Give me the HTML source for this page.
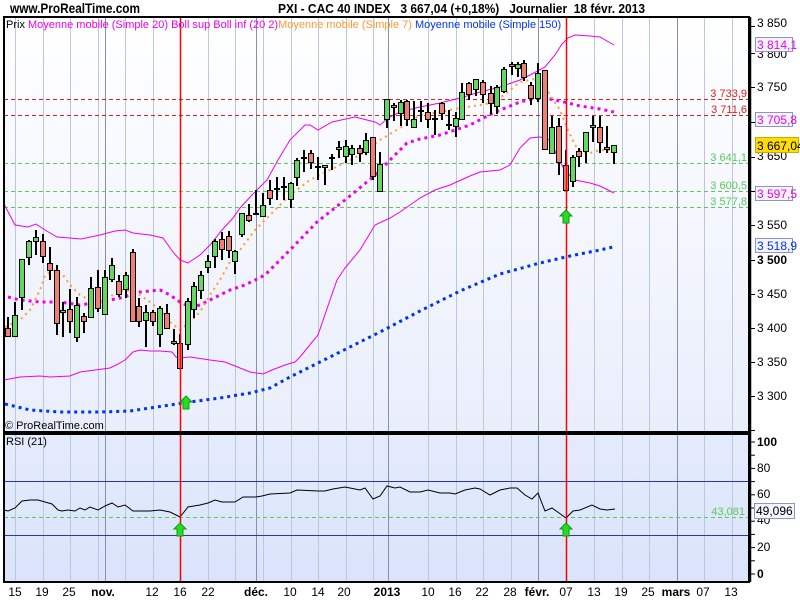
<!DOCTYPE html>
<html><head><meta charset="utf-8"><style>
body{margin:0;width:800px;height:600px;overflow:hidden;background:#fff}
svg{display:block}
text{font-family:"Liberation Sans",Arial,sans-serif}
</style></head><body>
<svg id="s" width="800" height="600" xmlns="http://www.w3.org/2000/svg">
<defs>
<linearGradient id="gm" x1="0" y1="0" x2="0" y2="1"><stop offset="0" stop-color="#ffffff"/><stop offset="1" stop-color="#e9eefb"/></linearGradient>
<linearGradient id="gr" x1="0" y1="0" x2="0" y2="1"><stop offset="0" stop-color="#e4ebfc"/><stop offset="1" stop-color="#dae3fa"/></linearGradient>
</defs>
<rect x="0" y="0" width="800" height="600" fill="#fff"/>
<rect x="4" y="17" width="745" height="415" fill="url(#gm)"/>
<rect x="4" y="434" width="745" height="148" fill="url(#gr)"/>
<g id="grid"></g>
<g id="hl">
<line x1="4" y1="99.5" x2="749" y2="99.5" stroke="#e02020" stroke-dasharray="4,3"/>
<line x1="4" y1="115.5" x2="749" y2="115.5" stroke="#e02020" stroke-dasharray="4,3"/>
<line x1="4" y1="163.5" x2="749" y2="163.5" stroke="#5cc85c" stroke-dasharray="4,3"/>
<line x1="4" y1="191.5" x2="749" y2="191.5" stroke="#5cc85c" stroke-dasharray="4,3"/>
<line x1="4" y1="207.5" x2="749" y2="207.5" stroke="#5cc85c" stroke-dasharray="4,3"/>
<line x1="4" y1="481.5" x2="749" y2="481.5" stroke="#2b36a8"/>
<line x1="4" y1="535.5" x2="749" y2="535.5" stroke="#2b36a8"/>
<line x1="4" y1="517.5" x2="749" y2="517.5" stroke="#5cc85c" stroke-dasharray="4,3"/>
</g>
<g id="lines"></g>
<g id="candles"></g>
<line x1="180.5" y1="17" x2="180.5" y2="582" stroke="#ff0000" stroke-width="1.5"/>
<line x1="566.5" y1="17" x2="566.5" y2="582" stroke="#ff0000" stroke-width="1.5"/>
<g id="arrows"></g>
<rect x="4" y="17" width="745" height="415" fill="none" stroke="#000" stroke-width="2"/>
<rect x="4" y="434" width="745" height="148" fill="none" stroke="#000" stroke-width="2"/>
<text x="10" y="13" font-size="14" font-weight="bold" textLength="130" lengthAdjust="spacingAndGlyphs">www.ProRealTime.com</text>
<text x="278" y="13" font-size="13" font-weight="bold" textLength="367" lengthAdjust="spacingAndGlyphs" xml:space="preserve">PXI - CAC 40 INDEX   3 667,04 (+0,18%)   Journalier  18 févr. 2013</text>
<text x="6" y="28" font-size="11"><tspan fill="#000">Prix </tspan><tspan fill="#ee00ee">Moyenne mobile (Simple 20)  Boll sup Boll inf (20 2)</tspan><tspan fill="#ff9933">Moyenne mobile (Simple 7)</tspan><tspan fill="#0033ee"> Moyenne mobile (Simple 150)</tspan></text>
<text x="5" y="429" font-size="11">© ProRealTime.com</text>
<text x="6" y="445" font-size="11">RSI (21)</text>
<g font-size="11" text-anchor="end">
<text x="747" y="97" fill="#e02020">3 733,9</text>
<text x="747" y="113" fill="#e02020">3 711,6</text>
<text x="747" y="161" fill="#5cc85c">3 641,1</text>
<text x="747" y="189" fill="#5cc85c">3 600,5</text>
<text x="747" y="205" fill="#5cc85c">3 577,8</text>
<text x="745" y="515" fill="#5cc85c">43,081</text>
</g>
<line x1="750.5" y1="17" x2="750.5" y2="582" stroke="#000" stroke-width="1.5"/>
<g id="ticks"></g>
<g font-size="12">
<text x="757" y="27">3 850</text>
<text x="757" y="58">3 800</text>
<text x="757" y="91">3 750</text>
<text x="757" y="160">3 650</text>
<text x="757" y="229">3 550</text>
<text x="757" y="264" font-weight="bold">3 500</text>
<text x="757" y="298">3 450</text>
<text x="757" y="332">3 400</text>
<text x="757" y="366">3 350</text>
<text x="757" y="400">3 300</text>
<text x="757" y="446" font-weight="bold">100</text>
<text x="757" y="472">80</text>
<text x="757" y="498">60</text>
<text x="757" y="524">40</text>
<text x="757" y="551">20</text>
<text x="757" y="578" font-weight="bold">0</text>
</g>
<g font-size="12">
<rect x="755.5" y="37.5" width="37" height="14" fill="#f4f4ff" stroke="#8899bb"/><text x="757" y="49" fill="#ee00ee">3 814,1</text>
<rect x="755.5" y="112.5" width="37" height="14" fill="#f4f4ff" stroke="#8899bb"/><text x="757" y="124" fill="#ee00ee">3 705,8</text>
<rect x="755.5" y="137.5" width="43" height="15" fill="#ffdd00" stroke="#ccaa00"/><text x="757" y="150" fill="#000">3 667,04</text>
<rect x="755.5" y="186.5" width="37" height="14" fill="#f4f4ff" stroke="#8899bb"/><text x="757" y="198" fill="#ee00ee">3 597,5</text>
<rect x="755.5" y="238.5" width="37" height="14" fill="#f4f4ff" stroke="#8899bb"/><text x="757" y="250" fill="#0033ee">3 518,9</text>
<rect x="754.5" y="503.5" width="40" height="15" fill="#f4f4ff" stroke="#8899bb"/><text x="756" y="515" fill="#000">49,096</text>
</g>
<g font-size="12" text-anchor="middle">
<text x="15" y="596">15</text><text x="42" y="596">19</text><text x="69" y="596">25</text>
<text x="103" y="596" font-weight="bold">nov.</text>
<text x="152" y="596">12</text><text x="180" y="596">16</text><text x="208" y="596">22</text>
<text x="256" y="596" font-weight="bold">déc.</text>
<text x="290" y="596">10</text><text x="318" y="596">14</text><text x="344" y="596">20</text>
<text x="387" y="596" font-weight="bold">2013</text>
<text x="428" y="596">10</text><text x="455" y="596">16</text><text x="482" y="596">22</text><text x="510" y="596">28</text>
<text x="537" y="596" font-weight="bold">févr.</text>
<text x="566" y="596">07</text><text x="594" y="596">13</text><text x="621" y="596">19</text><text x="648" y="596">25</text>
<text x="676" y="596" font-weight="bold">mars</text>
<text x="703" y="596">07</text><text x="731" y="596">13</text>
</g>
</svg>
<script>
var NS="http://www.w3.org/2000/svg";
function el(p,t,a){var e=document.createElementNS(NS,t);for(var k in a)e.setAttribute(k,a[k]);document.getElementById(p).appendChild(e);return e;}
var gl=[15,43,70,98,125,153,208,235,263,291,318,346,373,428,456,483,511,594,622,649,704,732],dk=[105,256,388,538,677];
gl.forEach(function(x){el("grid","line",{x1:x+.5,y1:17,x2:x+.5,y2:582,stroke:"#bcc7dd"});});
dk.forEach(function(x){el("grid","line",{x1:x+.5,y1:17,x2:x+.5,y2:582,stroke:"#8591a8"});});
[26,53,87,122,157,191,225,260,294,328,362,396,430].forEach(function(y){el("ticks","line",{x1:750,y1:y+.5,x2:755,y2:y+.5,stroke:"#000"});});
for(var v=0;v<=100;v+=10){var y=574-1.32*v;el("ticks","line",{x1:750,y1:y,x2:755,y2:y,stroke:"#000"});}
function pl(pts,a){a.points=pts.map(function(p){return p.join(",")}).join(" ");a.fill="none";el("lines","polyline",a);}
pl([[4,204],[15,225],[28,227],[36,224],[45,230],[57,237],[70,238],[81,239],[100,235],[115,231],[125,230],[133,233],[150,235],[163,238],[173,252],[180,260],[188,263],[200,255],[210,245],[222,230],[233,218],[240,208],[252,195],[267,180],[278,160],[290,140],[305,125],[310,125],[318,130],[332,122],[355,117],[375,122],[380,125],[388,118],[400,112],[420,107],[440,103],[460,98],[480,92],[500,87],[520,80],[530,75],[545,67],[555,55],[562,44],[568,38],[575,35],[590,36],[600,37],[614,45]],{stroke:"#ee00ee"});
pl([[4,380],[20,377],[40,376],[50,377],[70,376],[80,372],[95,370],[110,368],[118,364],[125,360],[133,352],[140,350],[150,351],[160,351],[172,352],[176,357],[180,358],[190,357],[210,360],[225,362],[235,366],[250,372],[263,374],[272,370],[285,365],[295,362],[300,357],[318,335],[330,300],[337,280],[345,268],[360,250],[375,225],[390,218],[400,212],[420,198],[435,190],[450,185],[470,176],[480,172],[500,170],[510,165],[520,148],[530,138],[540,137],[550,140],[559,160],[566,172],[575,180],[590,183],[600,186],[614,193]],{stroke:"#ee00ee"});
pl([[8,297],[20,300],[40,302],[60,302],[80,305],[100,302],[120,298],[140,292],[160,290],[170,295],[180,302],[190,307],[200,305],[210,300],[220,295],[230,290],[245,285],[265,275],[290,250],[317,222],[345,200],[373,177],[390,160],[407,143],[420,139],[440,135],[470,125],[493,113],[520,102],[540,97],[560,101],[580,106],[600,109],[614,112]],{stroke:"#ee00ee","stroke-width":3,"stroke-dasharray":"3,4"});
pl([[5,327],[20,320],[30,310],[40,290],[45,275],[55,270],[63,275],[70,285],[80,295],[90,300],[100,302],[110,297],[120,290],[130,291],[140,295],[150,302],[160,310],[170,322],[180,330],[190,322],[200,312],[210,295],[220,280],[230,262],[240,250],[255,230],[270,215],[290,195],[310,180],[330,170],[360,155],[380,140],[400,128],[420,115],[440,112],[460,108],[480,105],[495,102],[510,90],[520,82],[530,80],[540,78],[550,95],[560,110],[568,130],[575,145],[582,152],[590,153],[600,150],[614,150]],{stroke:"#ff9933","stroke-width":2,"stroke-dasharray":"2,4"});
pl([[5,404],[30,410],[60,412],[100,412],[130,411],[150,408],[170,405],[190,402],[220,398],[250,393],[270,388],[290,377],[300,372],[340,352],[380,332],[420,311],[460,291],[500,274],[540,263],[570,256],[600,250],[613,247]],{stroke:"#0033ee","stroke-width":3,"stroke-dasharray":"3,4"});
pl([[4,510],[8,511],[15,508],[22,501],[30,500],[38,500],[45,502],[52,504],[58,510],[62,511],[68,510],[75,511],[80,508],[85,510],[90,507],[98,510],[105,506],[112,503],[118,507],[125,505],[133,511],[150,511],[160,510],[170,512],[180,517],[188,507],[200,505],[208,503],[215,500],[222,502],[235,502],[243,497],[256,497],[262,496],[270,494],[290,493],[297,490],[318,491],[325,491],[333,489],[345,487],[350,488],[360,490],[365,488],[373,499],[380,496],[387,486],[395,488],[400,487],[410,492],[420,492],[428,490],[440,493],[450,493],[455,494],[465,490],[475,488],[480,489],[490,495],[500,490],[510,488],[517,488],[525,495],[532,499],[538,493],[545,511],[552,508],[566,518],[573,511],[580,510],[592,505],[600,509],[607,510],[615,509]],{stroke:"#000"});
var C=[[8,328,337,317,337,'r'],[15,315,337,302,337,'g'],[22,259,298,259,310,'g'],[29,241,258,240,265,'g'],[36,237,242,230,255,'g'],[43,241,257,234,263,'r'],[50,263,271,247,280,'r'],[57,270,324,265,335,'r'],[63,310,313,302,337,'g'],[70,309,322,289,333,'r'],[77,305,338,297,342,'g'],[84,316,322,313,333,'r'],[91,288,318,277,318,'g'],[98,287,309,270,312,'r'],[105,277,315,270,315,'g'],[112,265,280,258,282,'g'],[119,281,295,275,297,'r'],[126,275,290,272,298,'g'],[133,252,322,249,322,'r'],[139,306,322,298,327,'r'],[146,312,321,305,347,'g'],[153,312,322,310,326,'r'],[160,308,335,306,347,'g'],[167,313,329,304,329,'r'],[174,341,344,329,345,'g'],[180,343,369,334,369,'r'],[188,301,345,298,350,'g'],[194,286,310,282,318,'g'],[201,275,291,271,299,'g'],[208,261,268,255,273,'g'],[215,241,257,239,268,'g'],[222,239,250,232,260,'r'],[229,236,251,231,258,'r'],[235,251,262,250,274,'g'],[242,213,235,213,237,'g'],[249,215,221,204,222,'r'],[256,213,214,190,215,'k'],[263,205,217,193,217,'g'],[270,190,199,180,205,'r'],[277,188,189,177,200,'k'],[284,186,187,177,200,'k'],[291,183,200,182,208,'g'],[297,160,178,158,186,'g'],[304,157,158,150,172,'k'],[311,153,163,150,169,'r'],[318,166,167,157,180,'k'],[325,165,168,165,185,'g'],[332,157,158,154,170,'k'],[339,147,149,141,158,'g'],[346,146,157,140,163,'g'],[352,148,155,145,165,'g'],[360,148,154,145,162,'r'],[366,140,153,133,155,'g'],[373,137,177,137,180,'r'],[380,164,192,152,192,'g'],[387,99,120,99,128,'g'],[394,105,108,103,121,'r'],[401,102,114,100,126,'g'],[407,101,120,100,126,'r'],[414,119,128,101,128,'g'],[421,110,111,101,122,'k'],[428,112,120,103,128,'r'],[435,118,119,110,135,'k'],[442,103,114,102,120,'r'],[449,124,125,110,130,'k'],[456,118,127,112,137,'g'],[462,92,120,83,120,'g'],[469,83,95,82,100,'r'],[476,79,90,79,96,'g'],[483,82,95,80,103,'r'],[491,93,104,86,114,'r'],[497,87,107,85,114,'g'],[504,69,92,67,93,'g'],[512,64,67,62,75,'r'],[518,64,69,62,77,'g'],[524,63,78,60,81,'r'],[531,85,99,82,105,'r'],[538,73,99,63,102,'g'],[545,70,150,70,150,'r'],[552,127,154,116,154,'g'],[559,126,163,118,175,'r'],[566,165,191,150,191,'r'],[573,157,182,155,187,'g'],[579,151,157,148,167,'r'],[586,132,152,132,163,'g'],[593,125,128,116,142,'g'],[600,127,143,116,153,'r'],[607,147,150,126,153,'r'],[614,145,153,145,164,'g']];
C.forEach(function(c){var x=c[0];el("candles","rect",{x:x-1,y:c[3],width:2,height:c[4]-c[3],fill:"#000"});
if(c[5]=='k'){el("candles","rect",{x:x-3,y:c[1],width:6,height:2,fill:"#000"});}
else el("candles","rect",{x:x-2.5,y:c[1]+.5,width:5,height:Math.max(c[2]-c[1]-1,2),fill:c[5]=='g'?"#62d862":"#ee7f74",stroke:"#000","stroke-width":1});});
function arrow(x,y){el("arrows","path",{d:"M"+x+" "+y+" l-6 6 h3 v7 h6 v-7 h3 z",fill:"#22dd22",stroke:"#119911","stroke-width":1});}
arrow(186,396);arrow(566,210);arrow(180,523);arrow(566,523);
</script>
</body></html>
